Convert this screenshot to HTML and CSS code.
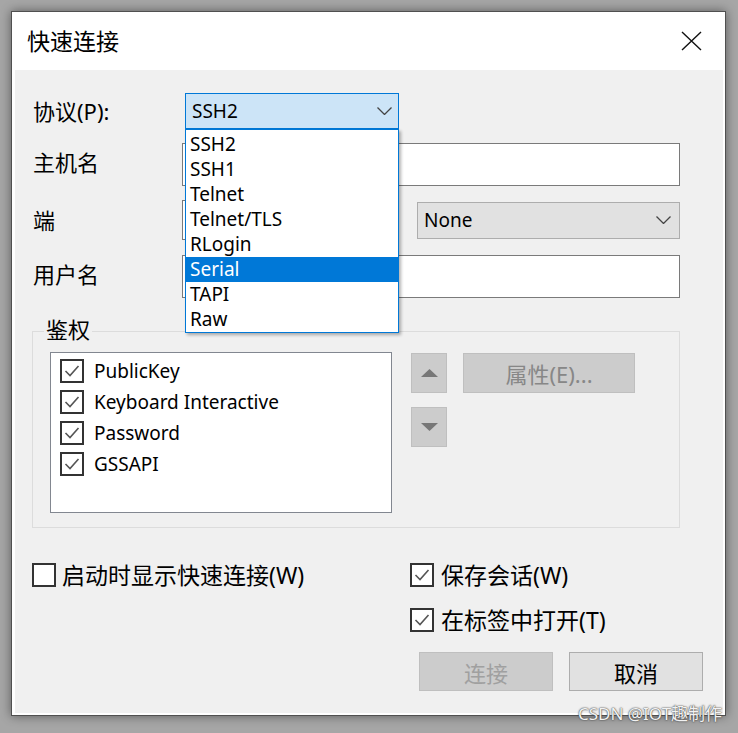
FILE: index.html
```html
<!DOCTYPE html>
<html lang="zh-CN">
<head>
  <meta charset="UTF-8" />
  <title>快速连接</title>
  <link rel="stylesheet" href="styles.css">
</head>
<body>
  <div class="window">
    <div class="titlebar">
      <span class="title">快速连接</span>
      <svg class="close" width="21" height="20" viewBox="0 0 21 20">
        <path d="M1 1 L20 19 M20 1 L1 19" stroke="#111" stroke-width="1.4" fill="none" />
      </svg>
    </div>

    <div class="content">
      <div class="row r-proto">
        <span class="lbl">协议(P):</span>
        <div class="combo-wrap">
          <div class="combo open">
            <span>SSH2</span>
            <svg width="15" height="8" viewBox="0 0 15 8"><polyline points="0.5,0.5 7.5,7.5 14.5,0.5" stroke="#444" stroke-width="1.3" fill="none" /></svg>
          </div>
          <ul class="droplist">
            <li>SSH2</li>
            <li>SSH1</li>
            <li>Telnet</li>
            <li>Telnet/TLS</li>
            <li>RLogin</li>
            <li class="sel">Serial</li>
            <li>TAPI</li>
            <li>Raw</li>
          </ul>
        </div>
      </div>

      <div class="row r-host">
        <span class="lbl">主机名</span>
        <div class="input wide"></div>
      </div>

      <div class="row r-port">
        <span class="lbl">端</span>
        <div class="input port"></div>
        <div class="combo plain">
          <span>None</span>
          <svg width="15" height="8" viewBox="0 0 15 8"><polyline points="0.5,0.5 7.5,7.5 14.5,0.5" stroke="#444" stroke-width="1.3" fill="none" /></svg>
        </div>
      </div>

      <div class="row r-user">
        <span class="lbl">用户名</span>
        <div class="input wide"></div>
      </div>

      <div class="group">
        <span class="group-title">鉴权</span>
        <div class="listbox">
          <div class="item"><span class="box"><svg width="20" height="20" viewBox="0 0 20 20"><polyline points="3.5,10 8,14.5 16.5,5" stroke="#555" stroke-width="1.6" fill="none" /></svg></span>PublicKey</div>
          <div class="item"><span class="box"><svg width="20" height="20" viewBox="0 0 20 20"><polyline points="3.5,10 8,14.5 16.5,5" stroke="#555" stroke-width="1.6" fill="none" /></svg></span>Keyboard Interactive</div>
          <div class="item"><span class="box"><svg width="20" height="20" viewBox="0 0 20 20"><polyline points="3.5,10 8,14.5 16.5,5" stroke="#555" stroke-width="1.6" fill="none" /></svg></span>Password</div>
          <div class="item"><span class="box"><svg width="20" height="20" viewBox="0 0 20 20"><polyline points="3.5,10 8,14.5 16.5,5" stroke="#555" stroke-width="1.6" fill="none" /></svg></span>GSSAPI</div>
        </div>
        <div class="order">
          <span class="btn-sq"><svg width="17" height="8" viewBox="0 0 17 8"><polygon points="0,8 8.5,0 17,8" fill="#777" /></svg></span>
          <span class="btn-sq"><svg width="17" height="8" viewBox="0 0 17 8"><polygon points="0,0 8.5,8 17,0" fill="#777" /></svg></span>
        </div>
        <span class="prop">属性(E)...</span>
      </div>

      <div class="options">
        <div class="opt-left">
          <div class="cb"><span class="box"></span>启动时显示快速连接(W)</div>
        </div>
        <div class="opt-right">
          <div class="cb cb-r"><span class="box"><svg width="20" height="20" viewBox="0 0 20 20"><polyline points="3.5,10 8,14.5 16.5,5" stroke="#555" stroke-width="1.6" fill="none" /></svg></span>保存会话(W)</div>
          <div class="cb cb-r"><span class="box"><svg width="20" height="20" viewBox="0 0 20 20"><polyline points="3.5,10 8,14.5 16.5,5" stroke="#555" stroke-width="1.6" fill="none" /></svg></span>在标签中打开(T)</div>
          <div class="buttons">
            <span class="btn disabled">连接</span>
            <span class="btn">取消</span>
          </div>
        </div>
      </div>
    </div>
  </div>

  <div class="watermark">CSDN @IOT趣制作</div>
</body>
</html>
```

FILE: styles.css
```css
* {
  box-sizing: border-box;
}
body {
  margin: 0;
  width: 738px;
  height: 733px;
  overflow: hidden;
  position: relative;
  background-color: #a6a6a6;
  font-family: "Noto Sans", "Noto Sans CJK SC", sans-serif;
  color: #000;
}
.window {
  margin: 11px 0 0 11px;
  width: 715px;
  height: 705px;
  background-color: #fff;
  border: 1px solid #505050;
  padding: 0 2px 2px 3px;
  box-shadow: 0 0 10px rgba(0, 0, 0, 0.45);
  display: flex;
  flex-direction: column;
}
.titlebar {
  margin: 0 -2px 0 -3px;
  height: 58px;
  display: flex;
  align-items: center;
  justify-content: space-between;
  padding: 0 23px 0 15px;
}
.title {
  font-size: 23px;
  line-height: 30px;
}
.content {
  flex: 1;
  background-color: #f0f0f0;
  padding: 23px 0 0 17px;
}
.row {
  display: flex;
  align-items: center;
}
.r-proto {
  height: 36px;
}
.r-host {
  height: 43px;
  margin-top: 14px;
}
.r-port {
  height: 40px;
  margin-top: 14px;
}
.r-user {
  height: 43px;
  margin-top: 15px;
}
.lbl {
  width: 150px;
  padding-left: 1px;
  font-size: 22px;
  line-height: 30px;
}
.r-host .lbl,
.r-user .lbl {
  margin-bottom: 5px;
}
.combo-wrap {
  position: relative;
  margin-left: 3px;
}
.combo {
  display: flex;
  align-items: center;
  justify-content: space-between;
  width: 214px;
  height: 36px;
  border: 1px solid #0078d7;
  background-color: #cce4f7;
  padding: 0 6px;
  font-size: 19px;
  line-height: 25px;
}
.combo.plain {
  width: 263px;
  height: 37px;
  margin-left: 18px;
  border-color: #adadad;
  background-color: #e1e1e1;
  padding: 0 8px 0 6px;
}
.droplist {
  position: absolute;
  top: 36px;
  left: 0;
  width: 214px;
  margin: 0;
  padding: 2px 0 0;
  list-style: none;
  background-color: #fff;
  border: 1px solid #0078d7;
  box-shadow: 2px 2px 3px rgba(0, 0, 0, 0.3);
  z-index: 2;
}
.droplist li {
  height: 25px;
  line-height: 25px;
  padding-left: 4px;
  font-size: 19px;
}
.droplist li.sel {
  background-color: #0078d7;
  color: #fff;
}
.input {
  height: 100%;
  background-color: #fff;
  border: 1px solid #7a7a7a;
}
.input.wide {
  width: 498px;
}
.input.port {
  width: 217px;
}
.group {
  position: relative;
  margin-top: 33px;
  width: 648px;
  height: 197px;
  border: 1px solid #dcdcdc;
  padding: 20px 0 0 17px;
  display: flex;
  align-items: flex-start;
}
.group-title {
  position: absolute;
  top: -18px;
  left: 11px;
  padding: 0 2px;
  background-color: #f0f0f0;
  font-size: 22px;
  line-height: 30px;
}
.listbox {
  width: 342px;
  height: 161px;
  background-color: #fff;
  border: 1px solid #828790;
  padding: 2px 0 0 9px;
}
.item {
  display: flex;
  align-items: center;
  height: 31px;
  font-size: 19px;
}
.box {
  flex: none;
  display: flex;
  width: 24px;
  height: 24px;
  border: 2px solid #333;
  background-color: #fff;
}
.item .box {
  margin-right: 10px;
}
.order {
  display: flex;
  flex-direction: column;
  gap: 14px;
  margin: 1px 0 0 19px;
}
.btn-sq {
  display: flex;
  align-items: center;
  justify-content: center;
  width: 36px;
  height: 40px;
  background-color: #ccc;
  border: 1px solid #bfbfbf;
}
.prop {
  display: flex;
  align-items: center;
  justify-content: center;
  margin: 1px 0 0 16px;
  width: 172px;
  height: 40px;
  background-color: #ccc;
  border: 1px solid #bfbfbf;
  color: #878787;
  font-size: 22px;
}
.options {
  display: flex;
  margin-top: 34px;
}
.opt-left {
  width: 378px;
}
.opt-right {
  display: flex;
  flex-direction: column;
  gap: 20px;
}
.cb {
  display: flex;
  align-items: center;
  height: 25px;
  font-size: 23px;
  line-height: 30px;
}
.cb .box {
  margin-right: 6px;
}
.cb-r .box {
  margin-right: 7px;
}
.buttons {
  display: flex;
  gap: 16px;
  margin-left: 9px;
}
.btn {
  display: flex;
  align-items: center;
  justify-content: center;
  width: 134px;
  height: 39px;
  font-size: 22px;
  background-color: #e1e1e1;
  border: 1px solid #adadad;
}
.btn.disabled {
  background-color: #ccc;
  border-color: #bfbfbf;
  color: #a0a0a0;
}
.watermark {
  position: absolute;
  left: 578px;
  top: 703px;
  font-size: 17px;
  line-height: 22px;
  color: #f2f2f2;
  text-shadow: 0 0 2px #444, 0 0 1px #444;
}
```
